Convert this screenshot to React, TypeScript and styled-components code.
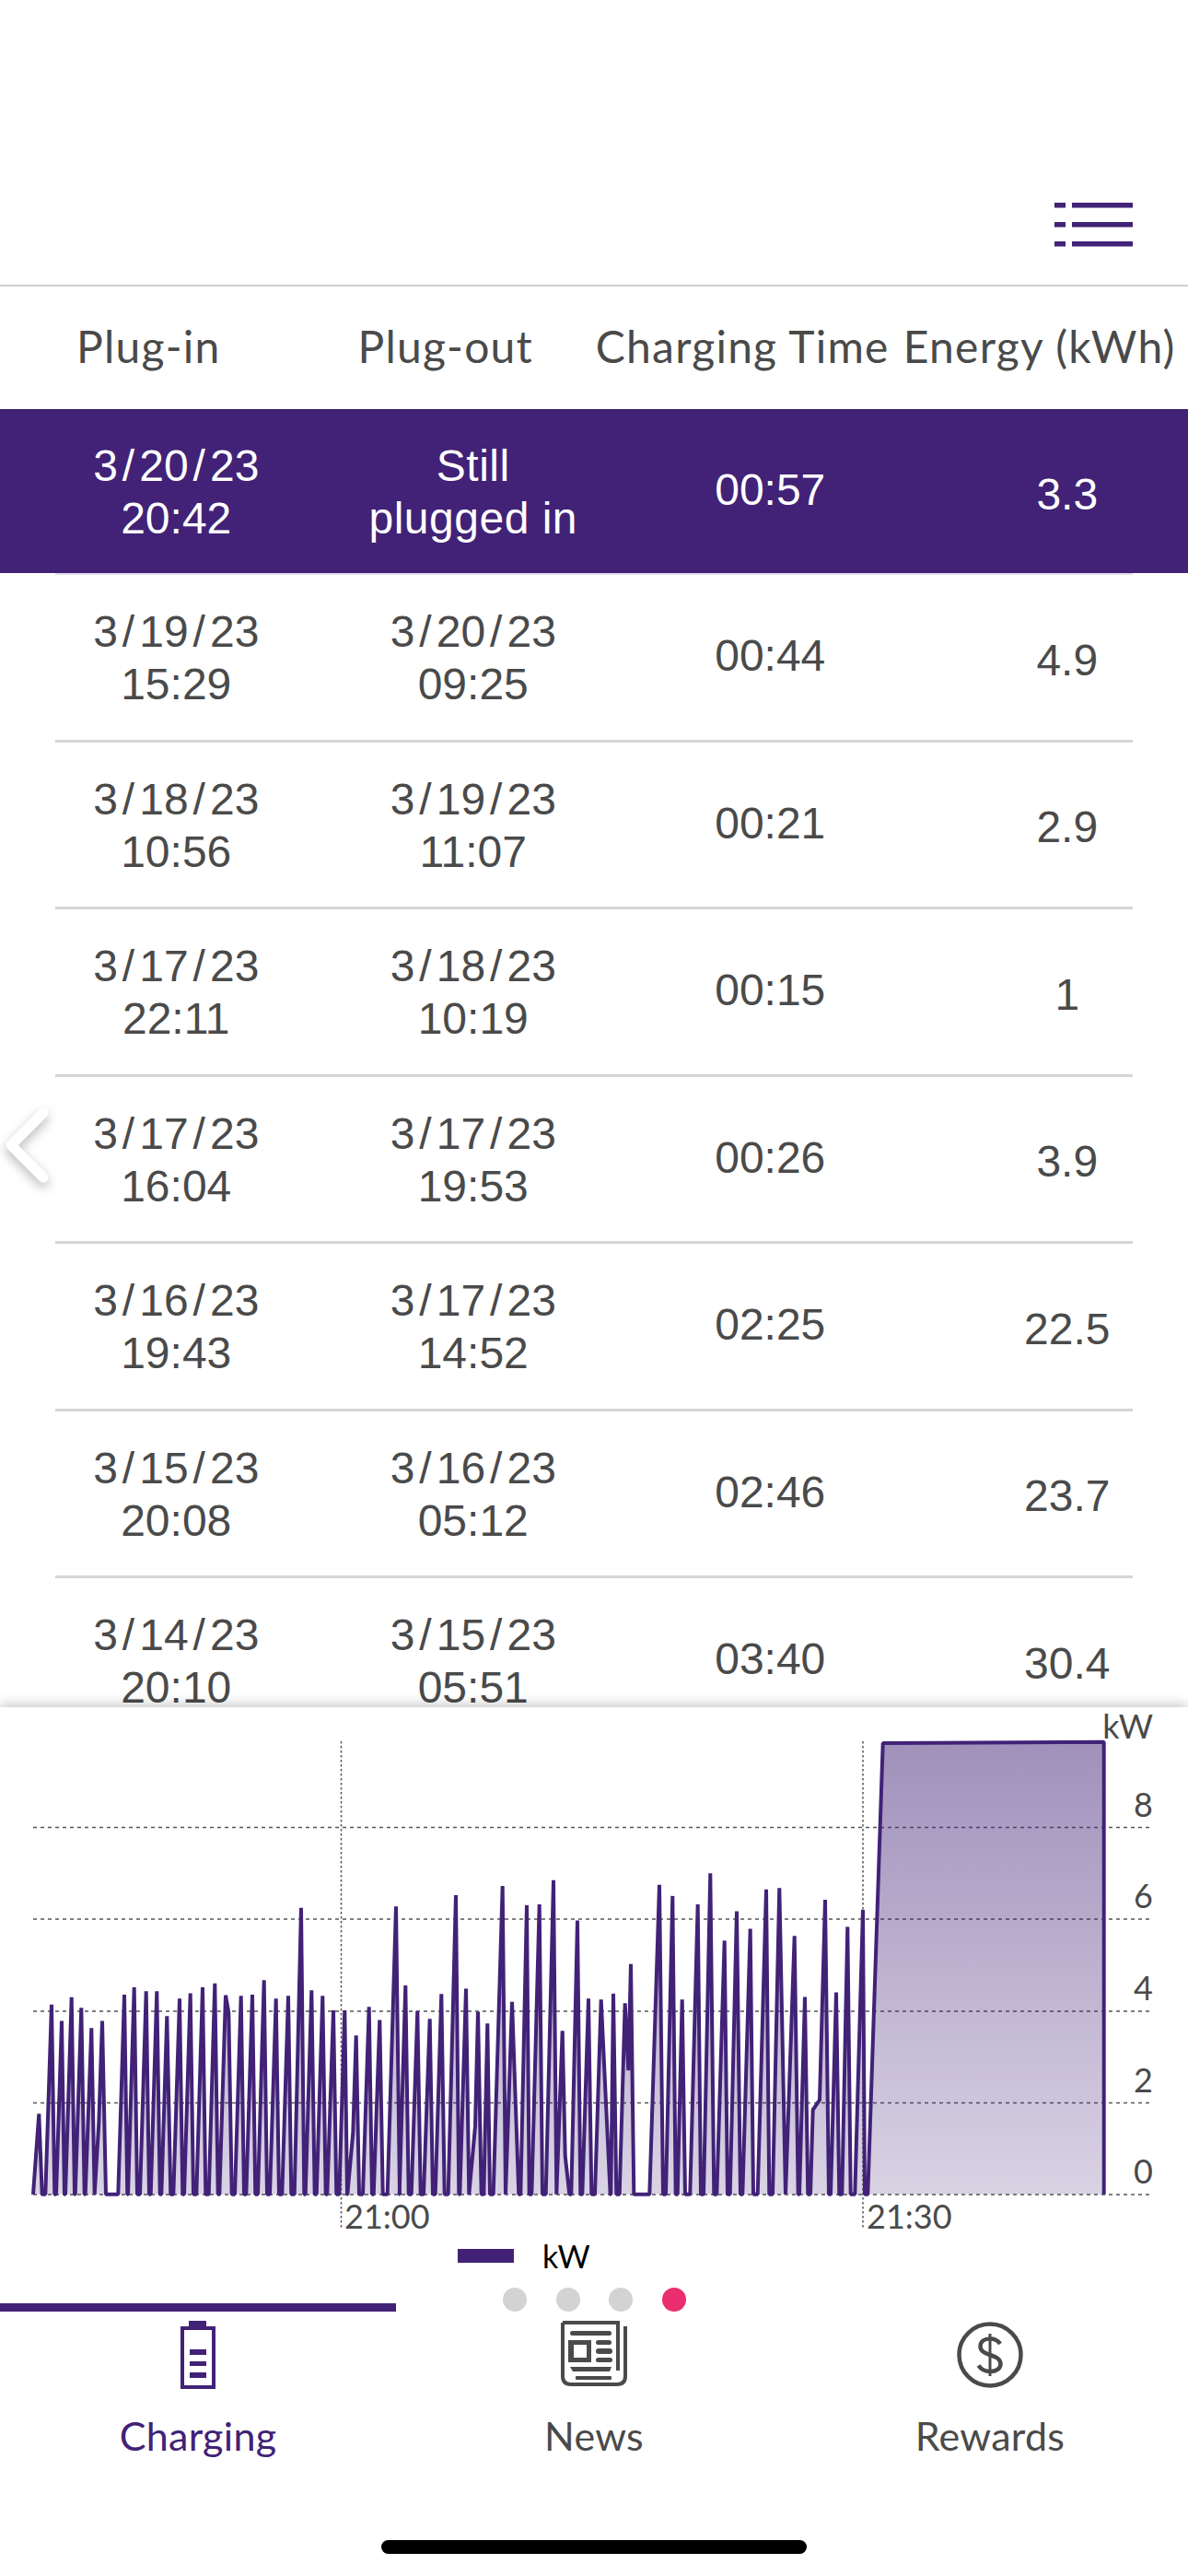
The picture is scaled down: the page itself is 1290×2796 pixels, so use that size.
import React from "react";
import styled, { createGlobalStyle } from "styled-components";

const PURPLE = "#412277";
const GREY = "#4a4a4a";
const AVENIR = `Lato, "Noto Sans", sans-serif`;

const Global = createGlobalStyle`
  html, body { margin: 0; padding: 0; background: #fff; }
  * { box-sizing: border-box; }
`;

const Screen = styled.div`
  position: relative;
  width: 1290px;
  height: 2796px;
  display: flex;
  flex-direction: column;
  overflow: hidden;
  background: #fff;
  font-family: "Liberation Sans", Arial, sans-serif;
  color: ${GREY};
`;

const TopBar = styled.header`
  flex: none;
  height: 311px;
  padding: 220px 60px 0 0;
  display: flex;
  justify-content: flex-end;
  align-items: flex-start;
  border-bottom: 2px solid #cfcfcf;
`;

const HeaderRow = styled.div`
  flex: none;
  height: 133px;
  display: grid;
  grid-template-columns: repeat(4, 1fr);
  align-items: center;
  justify-items: center;
`;

const HeaderCell = styled.div`
  font-family: ${AVENIR};
  font-size: 48px;
  letter-spacing: 1.2px;
  line-height: 56px;
  white-space: nowrap;
  padding-bottom: 4px;
`;

const List = styled.div`
  flex: none;
  height: 1409px;
  overflow: hidden;
`;

const Row = styled.div<{ $active?: boolean }>`
  height: ${(p) => (p.$active ? "178px" : "178.5px")};
  padding-left: 30px;
  display: grid;
  grid-template-columns: repeat(4, 322.5px);
  align-items: center;
  justify-items: center;
  background: ${(p) => (p.$active ? PURPLE : "transparent")};
  color: ${(p) => (p.$active ? "#fff" : GREY)};
`;

const Divider = styled.div<{ $light?: boolean }>`
  height: ${(p) => (p.$light ? "2px" : "3px")};
  margin: 0 60px;
  background: ${(p) => (p.$light ? "#e2dcea" : "#d5d5d5")};
`;

const Cell = styled.div<{ $kind?: "date" | "time" | "energy" }>`
  font-size: 48px;
  line-height: 57px;
  text-align: center;
  white-space: nowrap;
  padding-top: ${(p) => (p.$kind === "energy" ? "6px" : p.$kind === "date" ? "2px" : "0")};
  padding-bottom: ${(p) => (p.$kind === "time" ? "3px" : "0")};
`;

const Wide = styled.span`
  letter-spacing: 0.5px;
`;

const Slash = styled.span`
  margin: 0 5px;
`;

const ChevronWrap = styled.div`
  position: absolute;
  left: 0;
  top: 1196px;
  width: 64px;
  height: 96px;
  filter: drop-shadow(0 5px 6px rgba(0, 0, 0, 0.28));
`;

const ChartPanel = styled.section`
  position: relative;
  flex: none;
  padding-bottom: 28px;
  background: #fff;
  box-shadow: 0 -3px 12px rgba(0, 0, 0, 0.22);
`;

const ChartSvg = styled.svg`
  display: block;
  width: 1290px;
  height: 572px;
`;

const Legend = styled.div`
  height: 47px;
  padding-left: 497px;
  display: flex;
  align-items: center;
  gap: 31px;
`;

const Swatch = styled.span`
  width: 61px;
  height: 15px;
  background: ${PURPLE};
`;

const LegendLabel = styled.span`
  font-family: ${AVENIR};
  font-size: 34px;
  line-height: 40px;
  color: #000;
`;

const TabBar = styled.nav`
  position: relative;
  flex: none;
  background: #fff;
  display: grid;
  grid-template-columns: repeat(3, 1fr);
`;

const Dots = styled.div`
  position: absolute;
  left: 546px;
  top: -17px;
  display: flex;
  gap: 31.5px;
`;

const Dot = styled.span<{ $on?: boolean }>`
  width: 26px;
  height: 26px;
  border-radius: 50%;
  background: ${(p) => (p.$on ? "#e92d6f" : "#d3d3d3")};
`;

const Tab = styled.div<{ $active?: boolean }>`
  display: flex;
  flex-direction: column;
  align-items: center;
  padding-top: 10px;
  border-top: 9px solid ${(p) => (p.$active ? PURPLE : "transparent")};
  color: ${(p) => (p.$active ? PURPLE : GREY)};
`;

const TabIcon = styled.svg`
  display: block;
  width: 76px;
  height: 74px;
`;

const TabLabel = styled.span`
  margin-top: 26px;
  font-family: ${AVENIR};
  font-size: 43px;
  letter-spacing: 0.3px;
  line-height: 50px;
`;

const HomeBar = styled.div`
  flex: none;
  width: 462px;
  height: 15px;
  margin: auto auto 24px;
  border-radius: 8px;
  background: #000;
`;

type Rec = [string, string, string, string, string, string];
const rows: Rec[] = [
  ["3/19/23", "15:29", "3/20/23", "09:25", "00:44", "4.9"],
  ["3/18/23", "10:56", "3/19/23", "11:07", "00:21", "2.9"],
  ["3/17/23", "22:11", "3/18/23", "10:19", "00:15", "1"],
  ["3/17/23", "16:04", "3/17/23", "19:53", "00:26", "3.9"],
  ["3/16/23", "19:43", "3/17/23", "14:52", "02:25", "22.5"],
  ["3/15/23", "20:08", "3/16/23", "05:12", "02:46", "23.7"],
  ["3/14/23", "20:10", "3/15/23", "05:51", "03:40", "30.4"],
];

const DateText = ({ v }: { v: string }) => {
  const parts = v.split("/");
  return (
    <>
      {parts[0]}
      <Slash>/</Slash>
      {parts[1]}
      <Slash>/</Slash>
      {parts[2]}
    </>
  );
};

/* Chart vertices, measured in crops of 430px wide strips (x scale 3, y scale 2.8) */
const B = 1517;
const sp = (X: number, Y: number, l = 20, r = 10): number[][] => [
  [X - l, B],
  [X, Y],
  [X + r, B],
];
const strip1: number[][] = [
  [108, B],
  [127, 1272],
  [137, B],
  ...sp(168, 940),
  ...sp(201, 990, 18, 9),
  ...sp(233, 918),
  ...sp(265, 950),
  ...sp(298, 1012, 20, 10),
  [322, 1300],
  [333, 990],
  [345, B],
  ...sp(405, 910),
  ...sp(437, 888),
  ...sp(476, 900, 20, 10),
  ...sp(511, 900),
  ...sp(544, 975, 18, 12),
  ...sp(585, 922),
  ...sp(620, 906),
  ...sp(660, 888),
  ...sp(700, 876),
  [715, B],
  [735, 912],
  [745, 965],
  [755, B],
  ...sp(785, 914),
  ...sp(822, 910),
  ...sp(860, 866),
  ...sp(899, 922),
  ...sp(939, 914),
  ...sp(981, 646, 22, 10),
  ...sp(1015, 897),
  ...sp(1051, 914),
  ...sp(1086, 958),
  ...sp(1123, 958, 18, 8),
  [1132, B],
  [1150, 1330],
  [1160, 1034],
  [1170, B],
  ...sp(1202, 947),
  ...sp(1237, 987),
  [1262, B],
];
const strip2: number[][] = [
  [0, 642],
  [12, B],
  ...sp(31, 882),
  ...sp(70, 960),
  ...sp(110, 984),
  ...sp(148, 908),
  ...sp(195, 608, 25, 10),
  ...sp(228, 892),
  [238, B],
  [258, 1310],
  [267, 962],
  [278, B],
  ...sp(298, 998, 12, 8),
  ...sp(347, 580, 30, 10),
  [378, 932],
  [400, B],
  ...sp(426, 638, 20, 8),
  ...sp(467, 636, 25, 10),
  ...sp(513, 562, 25, 10),
  [542, 1020],
  [551, 1400],
  [565, B],
  ...sp(591, 685, 20, 10),
  ...sp(627, 922, 20, 10),
  [648, B],
  [668, 925],
  [698, B],
  ...sp(708, 907, 8, 10),
  [728, B],
  [746, 936],
  [757, 1140],
  [765, 817],
  [775, B],
  [826, B],
  [858, 576],
  [870, B],
  ...sp(901, 610, 22, 10),
  ...sp(932, 925, 15, 10),
  ...sp(983, 636, 25, 10),
  ...sp(1024, 541, 22, 12),
  ...sp(1070, 746, 25, 10),
  ...sp(1110, 657, 22, 12),
  ...sp(1154, 710, 25, 10),
  ...sp(1206, 590, 28, 10),
  ...sp(1249, 586, 22, 20),
];
const strip3: number[][] = [
  [8, 732],
  [20, B],
  ...sp(42, 917, 18, 10),
  [60, B],
  [68, 1260],
  [90, 1230],
  [108, 622],
  [120, B],
  ...sp(144, 903, 18, 10),
  ...sp(181, 704, 18, 10),
  ...sp(231, 652, 26, 6),
  [247, B],
  [296, 146],
  [1016, 142],
  [1016, B],
];
const toPts = (s: number[][], dx: number) =>
  s.map(([X, Y]) => `${(X / 3 + dx).toFixed(1)} ${(1840 + Y / 2.8).toFixed(1)}`);
const pts = [...toPts(strip1, 0), ...toPts(strip2, 430), ...toPts(strip3, 860)];
const line = "M" + pts.join(" L");

const yTicks: [string, number][] = [
  ["8", 1983.5],
  ["6", 2083],
  ["4", 2183],
  ["2", 2282.5],
  ["0", 2382],
];

const ChartLabel = styled.text`
  font-family: ${AVENIR};
  font-size: 36px;
  fill: ${GREY};
`;

const Chart = () => (
  <ChartSvg viewBox="0 1853 1290 572">
    <defs>
      <linearGradient id="area" gradientUnits="userSpaceOnUse" x1="0" y1="1890" x2="0" y2="2382">
        <stop offset="0" stopColor="#412277" stopOpacity="0.5" />
        <stop offset="1" stopColor="#412277" stopOpacity="0.2" />
      </linearGradient>
    </defs>
    {yTicks.map(([, y]) => (
      <line key={y} x1="36" x2="1251" y1={y} y2={y} stroke="#555" strokeWidth="1.5" strokeDasharray="4 4" />
    ))}
    {[370.5, 937].map((x) => (
      <line key={x} x1={x} x2={x} y1="1890" y2="2418" stroke="#555" strokeWidth="1.5" strokeDasharray="2.5 2.5" />
    ))}
    <path d={line + " Z"} fill="url(#area)" />
    <path d={line} fill="none" stroke={PURPLE} strokeWidth="4" strokeLinejoin="bevel" />
    <ChartLabel x="1252" y="1887" textAnchor="end">kW</ChartLabel>
    {yTicks.map(([t, y]) => (
      <ChartLabel key={t} x="1252" y={y - 12} textAnchor="end">{t}</ChartLabel>
    ))}
    <ChartLabel x="374" y="2419">21:00</ChartLabel>
    <ChartLabel x="941" y="2419">21:30</ChartLabel>
  </ChartSvg>
);

const BatteryIcon = () => (
  <TabIcon viewBox="0 0 76 74">
    <rect x="21" y="8" width="34" height="64" fill="none" stroke={PURPLE} strokeWidth="4" />
    <rect x="28" y="0" width="19" height="8" fill={PURPLE} />
    <rect x="29" y="31" width="18" height="6" fill={PURPLE} />
    <rect x="29" y="44" width="18" height="5" fill={PURPLE} />
    <rect x="29" y="56" width="18" height="6" fill={PURPLE} />
  </TabIcon>
);

const NewsIcon = () => (
  <TabIcon viewBox="0 0 76 74">
    <path
      d="M4 2 H64 V54 M4 2 V60 Q4 69 13 69 H63 Q72 69 72 60 V6"
      fill="none"
      stroke={GREY}
      strokeWidth="4"
    />
    <g fill={GREY}>
      <rect x="12" y="11" width="45" height="5" rx="2.5" />
      <path fillRule="evenodd" d="M10 21 H35 V45 H10 Z M16 26 V40 H30 V26 Z" />
      <rect x="40" y="21" width="17" height="5" rx="2.5" />
      <rect x="40" y="30" width="18" height="6" rx="3" />
      <rect x="40" y="40" width="18" height="5" rx="2.5" />
      <path d="M12 50 H57 L55 55 H15 Z" />
      <rect x="18" y="60" width="39" height="4" rx="1" />
    </g>
  </TabIcon>
);

const RewardsIcon = () => (
  <TabIcon viewBox="0 0 76 74">
    <circle cx="38" cy="37" r="33.5" fill="none" stroke={GREY} strokeWidth="4.5" />
    <path
      d="M49 25 C46 20.5 42 19.5 38 19.5 C32 19.5 27.5 22.5 27.5 27.5 C27.5 33 32 35 38 37 C44 39 49.5 41 49.5 47 C49.5 52 44.5 55 38.5 55 C33 55 28.5 53 25.5 48.5"
      fill="none"
      stroke={GREY}
      strokeWidth="4.5"
    />
    <path d="M38 14 V60" stroke={GREY} strokeWidth="3" />
  </TabIcon>
);

export default function App() {
  return (
    <Screen>
      <Global />
      <TopBar>
        <svg width="85" height="48" viewBox="0 0 85 48">
          <g fill={PURPLE}>
            <rect x="0" y="0" width="12" height="5.5" />
            <rect x="19" y="0" width="66" height="5.5" />
            <rect x="0" y="21" width="12" height="5.5" />
            <rect x="19" y="21" width="66" height="5.5" />
            <rect x="0" y="42" width="12" height="5.5" />
            <rect x="19" y="42" width="66" height="5.5" />
          </g>
        </svg>
      </TopBar>
      <HeaderRow>
        <HeaderCell>Plug-in</HeaderCell>
        <HeaderCell>Plug-out</HeaderCell>
        <HeaderCell>Charging Time</HeaderCell>
        <HeaderCell>Energy (kWh)</HeaderCell>
      </HeaderRow>
      <List>
        <Row $active>
          <Cell $kind="date">
            <DateText v="3/20/23" />
            <br />
            20:42
          </Cell>
          <Cell $kind="date">
            <Wide>Still</Wide>
            <br />
            <Wide>plugged in</Wide>
          </Cell>
          <Cell $kind="time">00:57</Cell>
          <Cell $kind="energy">3.3</Cell>
        </Row>
        <Divider $light />
        {rows.map((r) => (
          <React.Fragment key={r[0] + r[1]}>
            <Row>
              <Cell $kind="date">
                <DateText v={r[0]} />
                <br />
                {r[1]}
              </Cell>
              <Cell $kind="date">
                <DateText v={r[2]} />
                <br />
                {r[3]}
              </Cell>
              <Cell $kind="time">{r[4]}</Cell>
              <Cell $kind="energy">{r[5]}</Cell>
            </Row>
            <Divider />
          </React.Fragment>
        ))}
      </List>
      <ChevronWrap>
        <svg width="64" height="96" viewBox="0 0 64 96">
          <path d="M47 12 L12 47 L47 82" fill="none" stroke="#fff" strokeWidth="11" strokeLinecap="round" strokeLinejoin="round" />
        </svg>
      </ChevronWrap>
      <ChartPanel>
        <Chart />
        <Legend>
          <Swatch />
          <LegendLabel>kW</LegendLabel>
        </Legend>
      </ChartPanel>
      <TabBar>
        <Dots>
          <Dot />
          <Dot />
          <Dot />
          <Dot $on />
        </Dots>
        <Tab $active>
          <BatteryIcon />
          <TabLabel>Charging</TabLabel>
        </Tab>
        <Tab>
          <NewsIcon />
          <TabLabel>News</TabLabel>
        </Tab>
        <Tab>
          <RewardsIcon />
          <TabLabel>Rewards</TabLabel>
        </Tab>
      </TabBar>
      <HomeBar />
    </Screen>
  );
}
